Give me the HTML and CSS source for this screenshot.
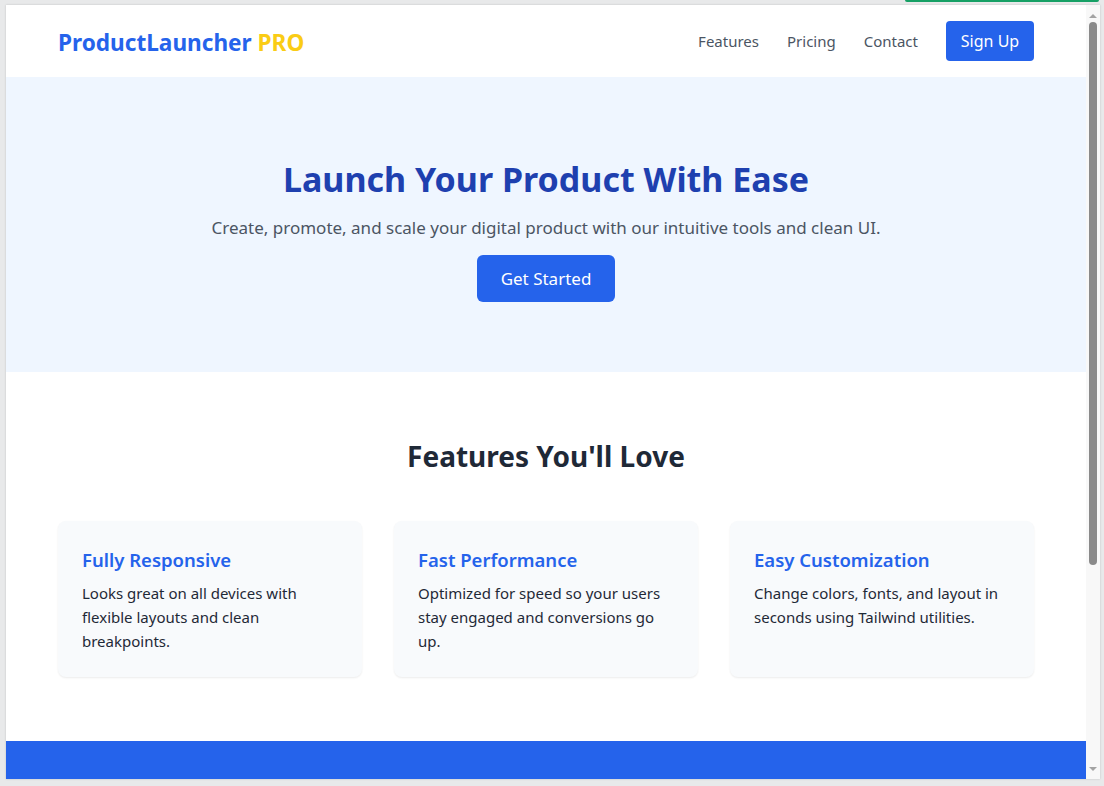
FILE: index.html
```html
<!DOCTYPE html>
<html lang="en">
<head>
<meta charset="utf-8">
<title>ProductLauncher PRO</title>
<link rel="stylesheet" href="styles.css">
</head>
<body>
<div class="tab-indicator"></div>
<div class="window">
  <div class="page">
    <header class="site-header">
      <div class="container nav-row">
        <a class="logo" href="#">ProductLauncher <span class="logo-pro">PRO</span></a>
        <nav class="nav">
          <a class="nav-link" href="#">Features</a>
          <a class="nav-link" href="#">Pricing</a>
          <a class="nav-link" href="#">Contact</a>
          <a class="btn btn-nav" href="#">Sign Up</a>
        </nav>
      </div>
    </header>

    <section class="hero">
      <h1 class="hero-title">Launch Your Product With Ease</h1>
      <p class="hero-text">Create, promote, and scale your digital product with our intuitive tools and clean UI.</p>
      <a class="btn btn-hero" href="#">Get Started</a>
    </section>

    <section class="features">
      <div class="container">
        <h2 class="features-title">Features You'll Love</h2>
        <div class="card-grid">
          <div class="card">
            <h3 class="card-title">Fully Responsive</h3>
            <p class="card-text">Looks great on all devices with flexible layouts and clean breakpoints.</p>
          </div>
          <div class="card">
            <h3 class="card-title">Fast Performance</h3>
            <p class="card-text">Optimized for speed so your users stay engaged and conversions go up.</p>
          </div>
          <div class="card">
            <h3 class="card-title">Easy Customization</h3>
            <p class="card-text">Change colors, fonts, and layout in seconds using Tailwind utilities.</p>
          </div>
        </div>
      </div>
    </section>

    <footer class="footer"></footer>
  </div>
  <div class="scrollbar">
    <span class="arrow arrow-up"></span>
    <div class="track"><div class="thumb"></div></div>
    <span class="arrow arrow-down"></span>
  </div>
</div>
</body>
</html>
```

FILE: styles.css
```css
* { box-sizing: border-box; margin: 0; padding: 0; }

html, body { height: 100%; }

body {
  background: #e8e9ea;
  padding: 5px 4px 7px 6px;
  font-family: "Noto Sans", "Open Sans", "Liberation Sans", sans-serif;
  position: relative;
  overflow: hidden;
}

.tab-indicator {
  position: absolute;
  top: 0;
  left: 905px;
  width: 194px;
  height: 2px;
  background: #16a065;
  border-radius: 0 0 3px 3px;
}

.window {
  display: flex;
  height: 774px;
  background: #fff;
  box-shadow: 0 0 2px rgba(0,0,0,0.18);
}

.page {
  width: 1080px;
  flex: none;
  overflow: hidden;
  background: #fff;
}

.container {
  max-width: 1024px;
  margin: 0 auto;
  padding: 0 24px;
}

/* header */
.site-header {
  background: #fff;
  padding: 16px 0 16px;
}
.nav-row {
  display: flex;
  align-items: center;
  justify-content: space-between;
}
.logo {
  font-size: 22.6px;
  font-weight: 700;
  color: #2563eb;
  text-decoration: none;
  line-height: 32px;
  padding-top: 4px;
}
.logo-pro { color: #facc15; }
.nav {
  display: flex;
  align-items: center;
  gap: 28px;
}
.nav-link {
  font-size: 15px;
  color: #4b5563;
  text-decoration: none;
}
.btn {
  display: inline-block;
  background: #2563eb;
  color: #fff;
  text-decoration: none;
  text-align: center;
}
.btn-nav {
  width: 88px;
  height: 40px;
  line-height: 40px;
  font-size: 16px;
  border-radius: 4px;
}

/* hero */
.hero {
  background: #eff6ff;
  text-align: center;
  padding: 82px 0 70px;
}
.hero-title {
  font-size: 34px;
  line-height: 40px;
  font-weight: 700;
  color: #1e40af;
}
.hero-text {
  margin-top: 15px;
  font-size: 17px;
  line-height: 28px;
  color: #4b5563;
}
.btn-hero {
  margin-top: 13px;
  width: 138px;
  height: 47px;
  line-height: 47px;
  font-size: 17px;
  border-radius: 6px;
}

/* features */
.features {
  padding: 66px 0 64px;
}
.features-title {
  text-align: center;
  font-size: 28px;
  line-height: 36px;
  font-weight: 700;
  color: #1f2937;
  margin-bottom: 47px;
}
.card-grid {
  display: grid;
  grid-template-columns: repeat(3, 1fr);
  gap: 32px;
}
.card {
  background: #f8fafc;
  border-radius: 8px;
  padding: 25px 24px 24px;
  min-height: 156px;
  box-shadow: 0 1px 2px rgba(0,0,0,0.08);
}
.card-title {
  font-size: 18.5px;
  line-height: 28px;
  font-weight: 600;
  color: #2563eb;
}
.card-text {
  margin-top: 7px;
  font-size: 15px;
  line-height: 24px;
  color: #1f2937;
}

.footer {
  background: #2563eb;
  height: 120px;
}

/* scrollbar */
.scrollbar {
  width: 14px;
  flex: none;
  background: #f8f8f8;
  display: flex;
  flex-direction: column;
  align-items: center;
  padding: 9px 0 8px;
}
.arrow {
  width: 0;
  height: 0;
  border-left: 4px solid transparent;
  border-right: 4px solid transparent;
}
.arrow-up { border-bottom: 4px solid #a3a3a3; }
.arrow-down { border-top: 4px solid #a3a3a3; }
.track {
  flex: 1;
  width: 100%;
  display: flex;
  justify-content: center;
  padding: 4px 0;
}
.thumb {
  width: 8px;
  height: 543px;
  background: #8a8a8a;
  border-radius: 4px;
}
```
